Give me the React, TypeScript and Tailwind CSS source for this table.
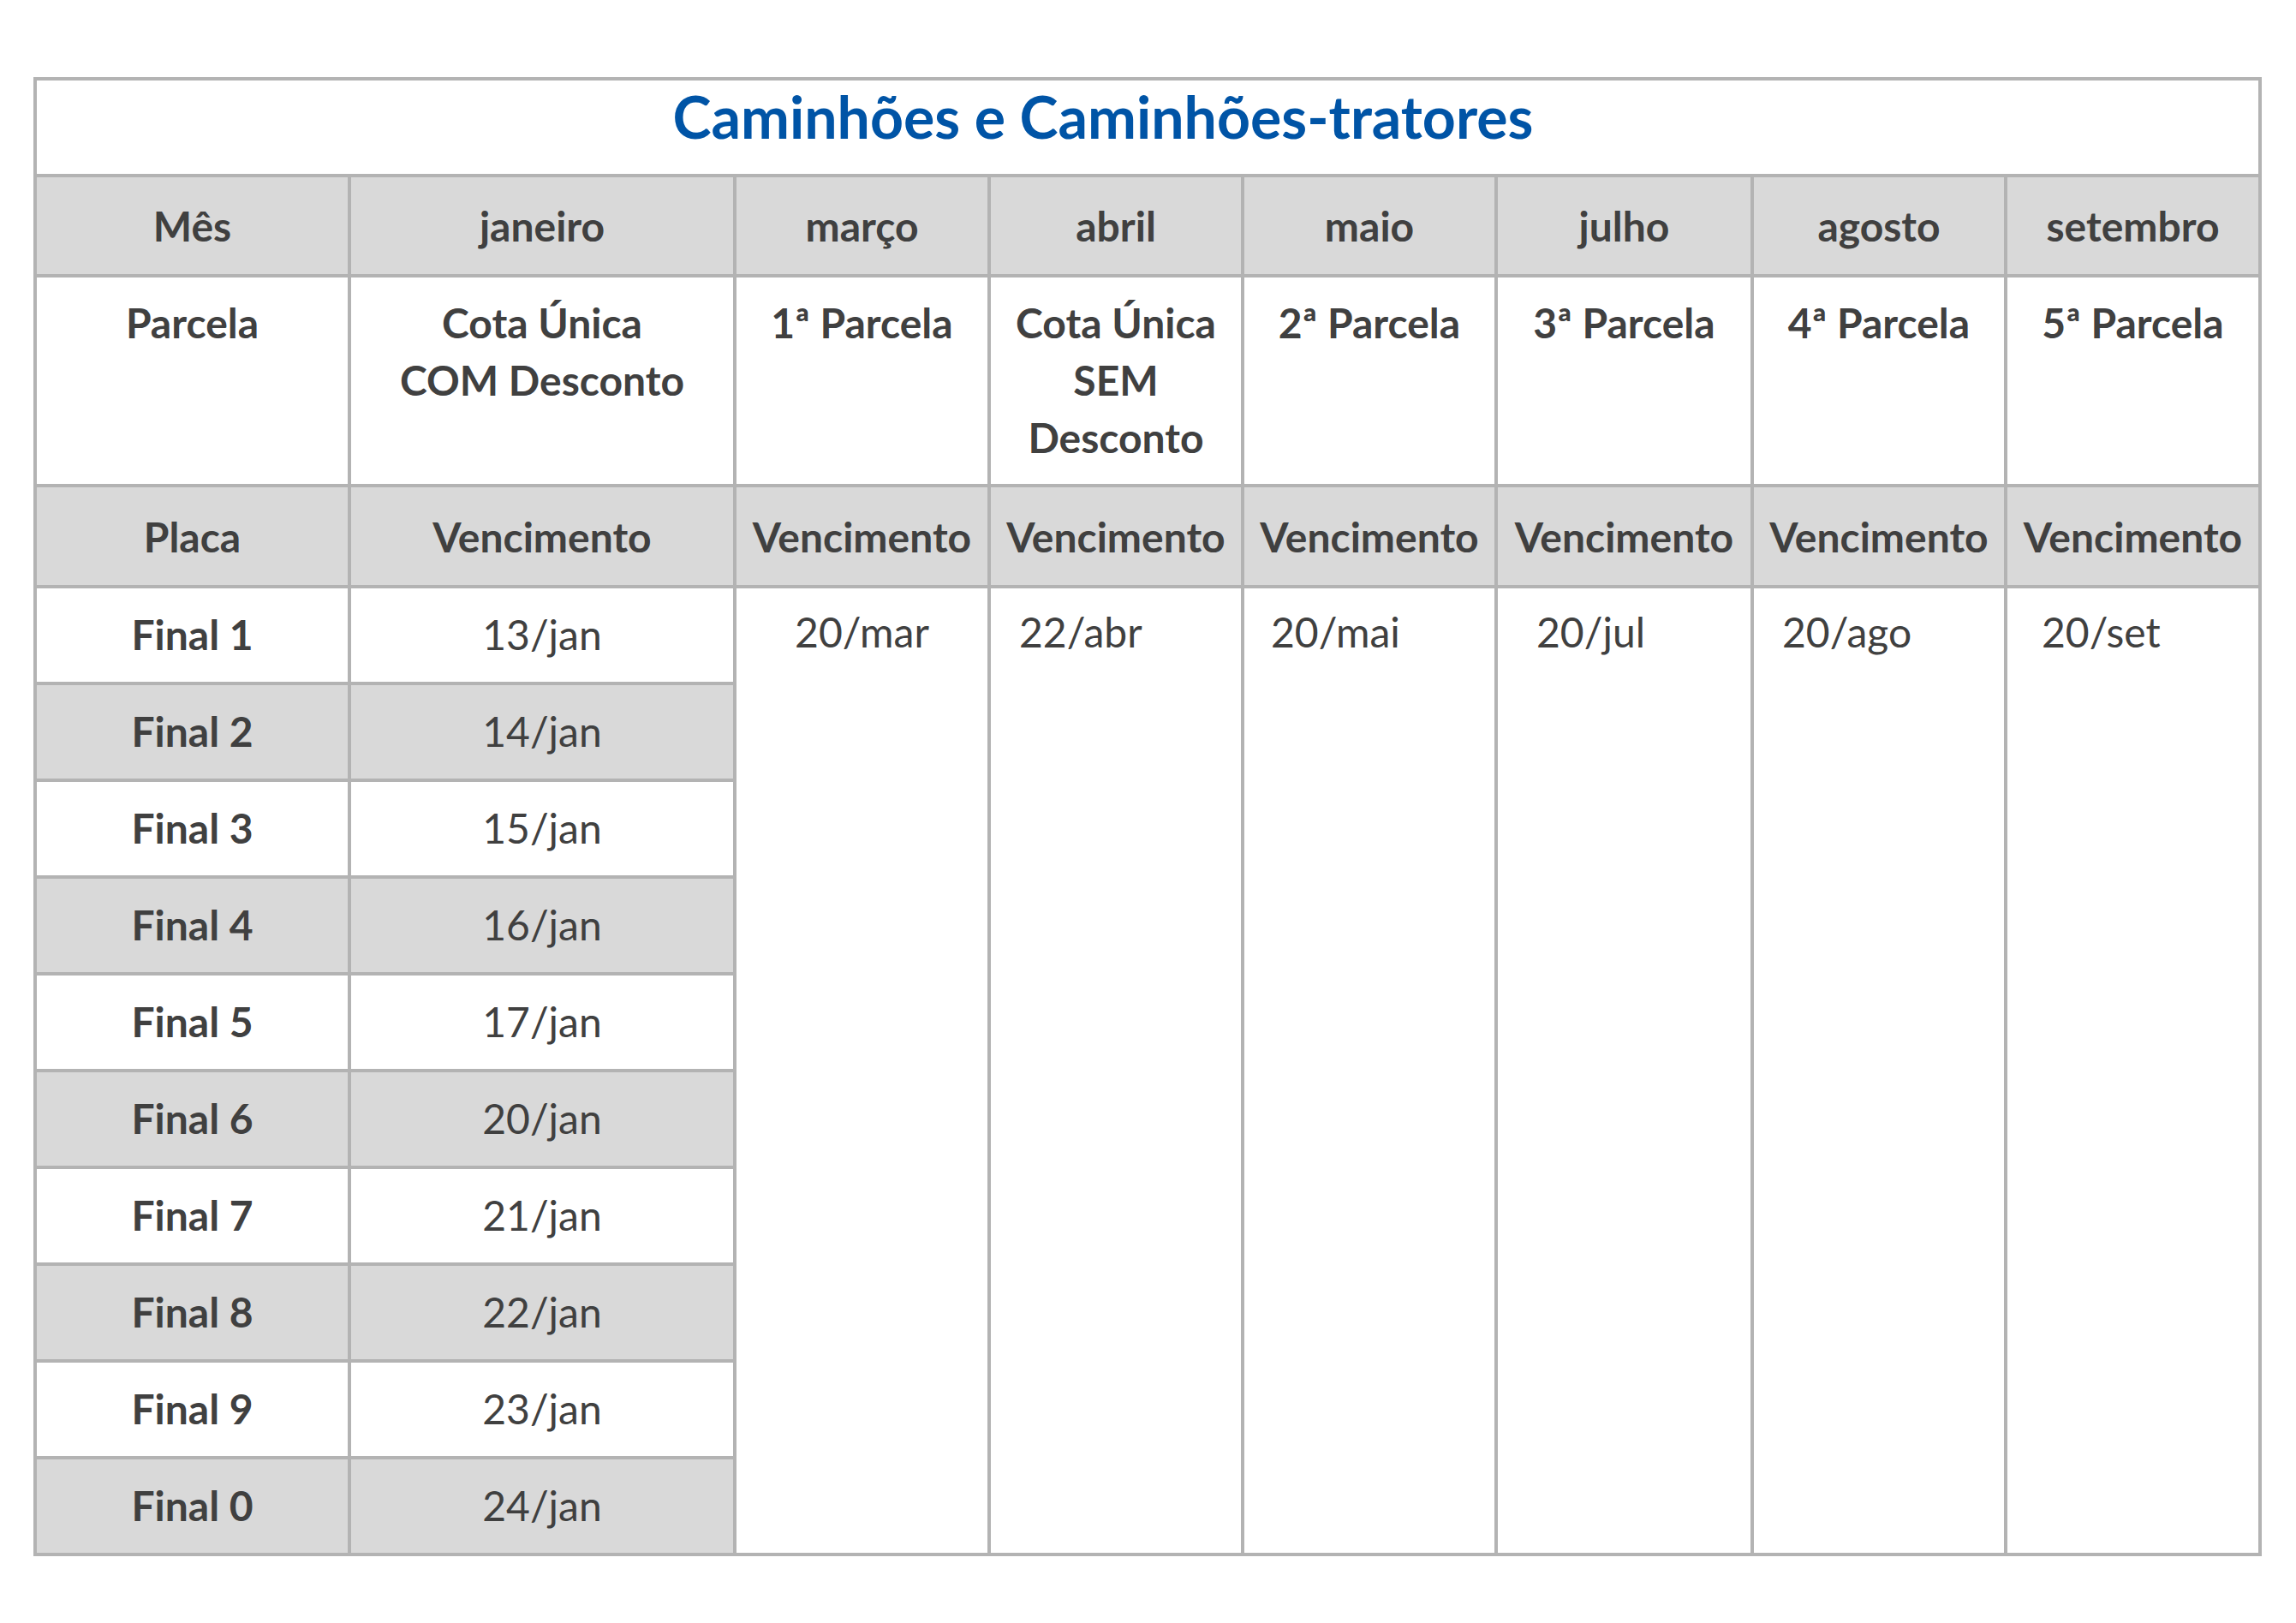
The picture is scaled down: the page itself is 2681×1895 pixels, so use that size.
import React from "react";

const months = ["janeiro", "março", "abril", "maio", "julho", "agosto", "setembro"];

const parcelas: React.ReactNode[] = [
  <>
    Cota Única
    <br />
    COM Desconto
  </>,
  "1ª Parcela",
  <>
    Cota Única
    <br />
    SEM
    <br />
    Desconto
  </>,
  "2ª Parcela",
  "3ª Parcela",
  "4ª Parcela",
  "5ª Parcela",
];

const janeiro = ["13/jan", "14/jan", "15/jan", "16/jan", "17/jan", "20/jan", "21/jan", "22/jan", "23/jan", "24/jan"];
const finais = ["1", "2", "3", "4", "5", "6", "7", "8", "9", "0"];

// single due dates that span all plate rows
const vencimentos = [
  { date: "20/mar", className: "text-center" },
  { date: "22/abr", className: "text-left pl-[33px]" },
  { date: "20/mai", className: "text-left pl-[31px]" },
  { date: "20/jul", className: "text-left pl-[45px]" },
  { date: "20/ago", className: "text-left pl-[33px]" },
  { date: "20/set", className: "text-left pl-[40px]" },
];

const cell = "border-[4px] border-[#b3b3b3] p-0";

const App = () => {
  return (
    <div className="min-h-screen bg-white pt-[90px] pl-[39px] font-['Lato','Liberation_Sans',sans-serif] text-[#404040]">
      <table className="table-fixed border-collapse w-[2602px] text-[48px] leading-[67px]">
        <colgroup>
          <col className="w-[367px]" />
          <col className="w-[450px]" />
          <col className="w-[297px]" />
          <col className="w-[296px]" />
          <col className="w-[296px]" />
          <col className="w-[299px]" />
          <col className="w-[296px]" />
          <col className="w-[297px]" />
        </colgroup>
        <tbody>
          <tr className="h-[113px]">
            <td
              colSpan={8}
              className={`${cell} align-top text-center pt-[1px] pr-[104px] text-[68px] leading-[82px] font-bold text-[#0054a6]`}
            >
              Caminhões e Caminhões-tratores
            </td>
          </tr>

          <tr className="h-[117px] bg-[#d9d9d9]">
            <td className={`${cell} text-center align-middle font-bold`}>Mês</td>
            {months.map((m) => (
              <td key={m} className={`${cell} text-center align-middle font-bold`}>
                {m}
              </td>
            ))}
          </tr>

          <tr className="h-[245px] bg-white">
            <td className={`${cell} text-center align-top pt-[19px] font-bold`}>Parcela</td>
            {parcelas.map((p, i) => (
              <td key={i} className={`${cell} text-center align-top pt-[19px] font-bold`}>
                {p}
              </td>
            ))}
          </tr>

          <tr className="h-[118px] bg-[#d9d9d9]">
            <td className={`${cell} text-center align-middle font-bold`}>Placa</td>
            {months.map((m) => (
              <td key={m} className={`${cell} text-center align-middle font-bold`}>
                Vencimento
              </td>
            ))}
          </tr>

          {finais.map((f, i) => (
            <tr key={f} className={`h-[113px] ${i % 2 === 1 ? "bg-[#d9d9d9]" : "bg-white"}`}>
              <td className={`${cell} text-center align-middle pb-[3px] font-bold`}>Final {f}</td>
              <td className={`${cell} text-center align-middle pb-[3px] font-normal`}>{janeiro[i]}</td>
              {i === 0 &&
                vencimentos.map((v) => (
                  <td
                    key={v.date}
                    rowSpan={10}
                    className={`${cell} bg-white align-top pt-[17px] font-normal ${v.className}`}
                  >
                    {v.date}
                  </td>
                ))}
            </tr>
          ))}
        </tbody>
      </table>
    </div>
  );
};

export default App;
